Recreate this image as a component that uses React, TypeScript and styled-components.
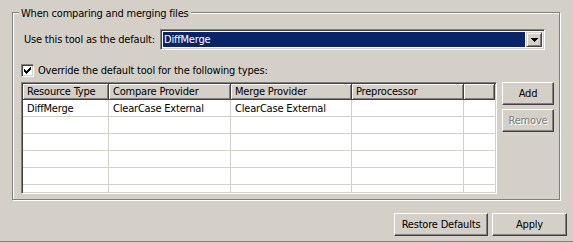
import React from 'react';
import styled, { createGlobalStyle } from 'styled-components';

const GlobalStyle = createGlobalStyle`
	html, body {
		margin: 0;
		padding: 0;
		background: #d4d0c8;
	}
	body {
		font-family: 'DejaVu Sans Condensed', 'Liberation Sans', Arial, sans-serif;
		font-size: 11px;
		letter-spacing: -0.2px;
		color: #000;
	}
	* {
		box-sizing: border-box;
	}
`;

const Page = styled.div`
	width: 573px;
	height: 242px;
	display: flex;
	flex-direction: column;
	background: #d4d0c8;
	border-bottom: 1px solid #808080;
	padding: 12px 0 0 12px;
	overflow: hidden;
`;

const Group = styled.div`
	position: relative;
	width: 548px;
	height: 188px;
	border: 1px solid #808080;
	box-shadow: inset 1px 1px 0 #fff, 1px 1px 0 #fff;
	padding: 16px 0 0 8px;
	display: flex;
	flex-direction: column;
`;

const Legend = styled.span`
	position: absolute;
	top: -6px;
	left: 6px;
	padding: 0 2px;
	background: #d4d0c8;
	line-height: 13px;
	white-space: nowrap;
`;

const ComboRow = styled.div`
	display: flex;
	align-items: center;
	height: 21px;
`;

const Label = styled.span`
	width: 139px;
	padding-left: 3px;
	white-space: nowrap;
`;

const Combo = styled.div`
	width: 385px;
	height: 21px;
	display: flex;
	align-items: stretch;
	background: #fff;
	border: 1px solid;
	border-color: #808080 #fff #fff #808080;
	box-shadow: inset 1px 1px 0 #404040, inset -1px -1px 0 #d4d0c8;
	padding: 2px;
`;

const Selection = styled.div`
	flex: 1;
	margin-right: 1px;
	background: #0a246a;
	color: #fff;
	padding-left: 1px;
	display: flex;
	align-items: center;
`;

const DropButton = styled.div`
	width: 16px;
	display: flex;
	align-items: center;
	justify-content: center;
	background: #d4d0c8;
	border: 1px solid;
	border-color: #d4d0c8 #404040 #404040 #d4d0c8;
	box-shadow: inset 1px 1px 0 #fff, inset -1px -1px 0 #808080;
`;

const CheckRow = styled.label`
	display: flex;
	align-items: center;
	gap: 4px;
	height: 13px;
	margin-top: 14px;
	white-space: nowrap;
`;

const CheckBox = styled.span`
	width: 13px;
	height: 13px;
	flex: none;
	display: flex;
	align-items: center;
	justify-content: center;
	background: #fff;
	border: 1px solid;
	border-color: #808080 #fff #fff #808080;
	box-shadow: inset 1px 1px 0 #404040, inset -1px -1px 0 #d4d0c8;
`;

const TableArea = styled.div`
	display: flex;
	gap: 5px;
	margin-top: 5px;
`;

const Table = styled.div`
	width: 476px;
	height: 112px;
	overflow: hidden;
	background: #fff;
	border: 1px solid;
	border-color: #808080 #fff #fff #808080;
	box-shadow: inset 1px 1px 0 #404040, inset -1px -1px 0 #d4d0c8;
	padding: 1px;
	display: flex;
	flex-direction: column;
`;

const HeaderRow = styled.div`
	display: flex;
	height: 16px;
	flex: none;
`;

const HeaderCell = styled.div<{ $w?: number }>`
	${(p) => (p.$w ? `width: ${p.$w}px;` : 'flex: 1;')}
	flex-shrink: 0;
	background: #d4d0c8;
	border-right: 1px solid #404040;
	border-bottom: 1px solid #404040;
	box-shadow: inset 1px 1px 0 #fff, inset -1px -1px 0 #808080;
	padding: 0 4px;
	display: flex;
	align-items: center;
	white-space: nowrap;
	overflow: hidden;
`;

const Row = styled.div`
	display: flex;
	height: 17px;
	flex: none;
	border-bottom: 1px solid #d4d0c8;
`;

const Cell = styled.div<{ $w?: number }>`
	${(p) => (p.$w ? `width: ${p.$w}px; border-right: 1px solid #d4d0c8;` : 'flex: 1;')}
	flex-shrink: 0;
	padding: 0 4px;
	display: flex;
	align-items: center;
	white-space: nowrap;
	overflow: hidden;
`;

const SideButtons = styled.div`
	display: flex;
	flex-direction: column;
	gap: 4px;
`;

const Button = styled.div<{ $w: number; $disabled?: boolean }>`
	width: ${(p) => p.$w}px;
	height: 23px;
	display: flex;
	align-items: center;
	justify-content: center;
	background: #d4d0c8;
	border: 1px solid;
	border-color: #fff #404040 #404040 #fff;
	box-shadow: inset -1px -1px 0 #808080;
	color: ${(p) => (p.$disabled ? '#808080' : '#000')};
	text-shadow: ${(p) => (p.$disabled ? '1px 1px 0 #fff' : 'none')};
	white-space: nowrap;
	cursor: default;
`;

const Footer = styled.div`
	display: flex;
	justify-content: flex-end;
	gap: 4px;
	margin-top: 13px;
	padding-right: 6px;
`;

const columns = [
	{ title: 'Resource Type', w: 86 },
	{ title: 'Compare Provider', w: 122 },
	{ title: 'Merge Provider', w: 121 },
	{ title: 'Preprocessor', w: 112 },
];

const rows = [
	['DiffMerge', 'ClearCase External', 'ClearCase External', ''],
	['', '', '', ''],
	['', '', '', ''],
	['', '', '', ''],
	['', '', '', ''],
	['', '', '', ''],
];

function Check() {
	const px = [
		[6, 0, 1], [5, 1, 2], [0, 2, 1], [4, 2, 3], [0, 3, 2], [3, 3, 3],
		[0, 4, 5], [1, 5, 3], [2, 6, 1],
	];
	return (
		<svg width="7" height="7" viewBox="0 0 7 7" shapeRendering="crispEdges">
			{px.map(([x, y, w], i) => (
				<rect key={i} x={x} y={y} width={w} height={1} fill="#000" />
			))}
		</svg>
	);
}

function Arrow() {
	return (
		<svg width="7" height="4" viewBox="0 0 7 4" shapeRendering="crispEdges">
			<rect x="0" y="0" width="7" height="1" fill="#000" />
			<rect x="1" y="1" width="5" height="1" fill="#000" />
			<rect x="2" y="2" width="3" height="1" fill="#000" />
			<rect x="3" y="3" width="1" height="1" fill="#000" />
		</svg>
	);
}

export default function App() {
	return (
		<Page>
			<GlobalStyle />
			<Group>
				<Legend>When comparing and merging files</Legend>
				<ComboRow>
					<Label>Use this tool as the default:</Label>
					<Combo>
						<Selection>DiffMerge</Selection>
						<DropButton>
							<Arrow />
						</DropButton>
					</Combo>
				</ComboRow>
				<CheckRow>
					<CheckBox>
						<Check />
					</CheckBox>
					Override the default tool for the following types:
				</CheckRow>
				<TableArea>
					<Table>
						<HeaderRow>
							{columns.map((c) => (
								<HeaderCell key={c.title} $w={c.w}>
									{c.title}
								</HeaderCell>
							))}
							<HeaderCell />
						</HeaderRow>
						{rows.map((r, i) => (
							<Row key={i}>
								{r.map((v, j) => (
									<Cell key={j} $w={columns[j].w}>
										{v}
									</Cell>
								))}
								<Cell />
							</Row>
						))}
					</Table>
					<SideButtons>
						<Button $w={52}>Add</Button>
						<Button $w={52} $disabled>
							Remove
						</Button>
					</SideButtons>
				</TableArea>
			</Group>
			<Footer>
				<Button $w={94}>Restore Defaults</Button>
				<Button $w={75}>Apply</Button>
			</Footer>
		</Page>
	);
}
